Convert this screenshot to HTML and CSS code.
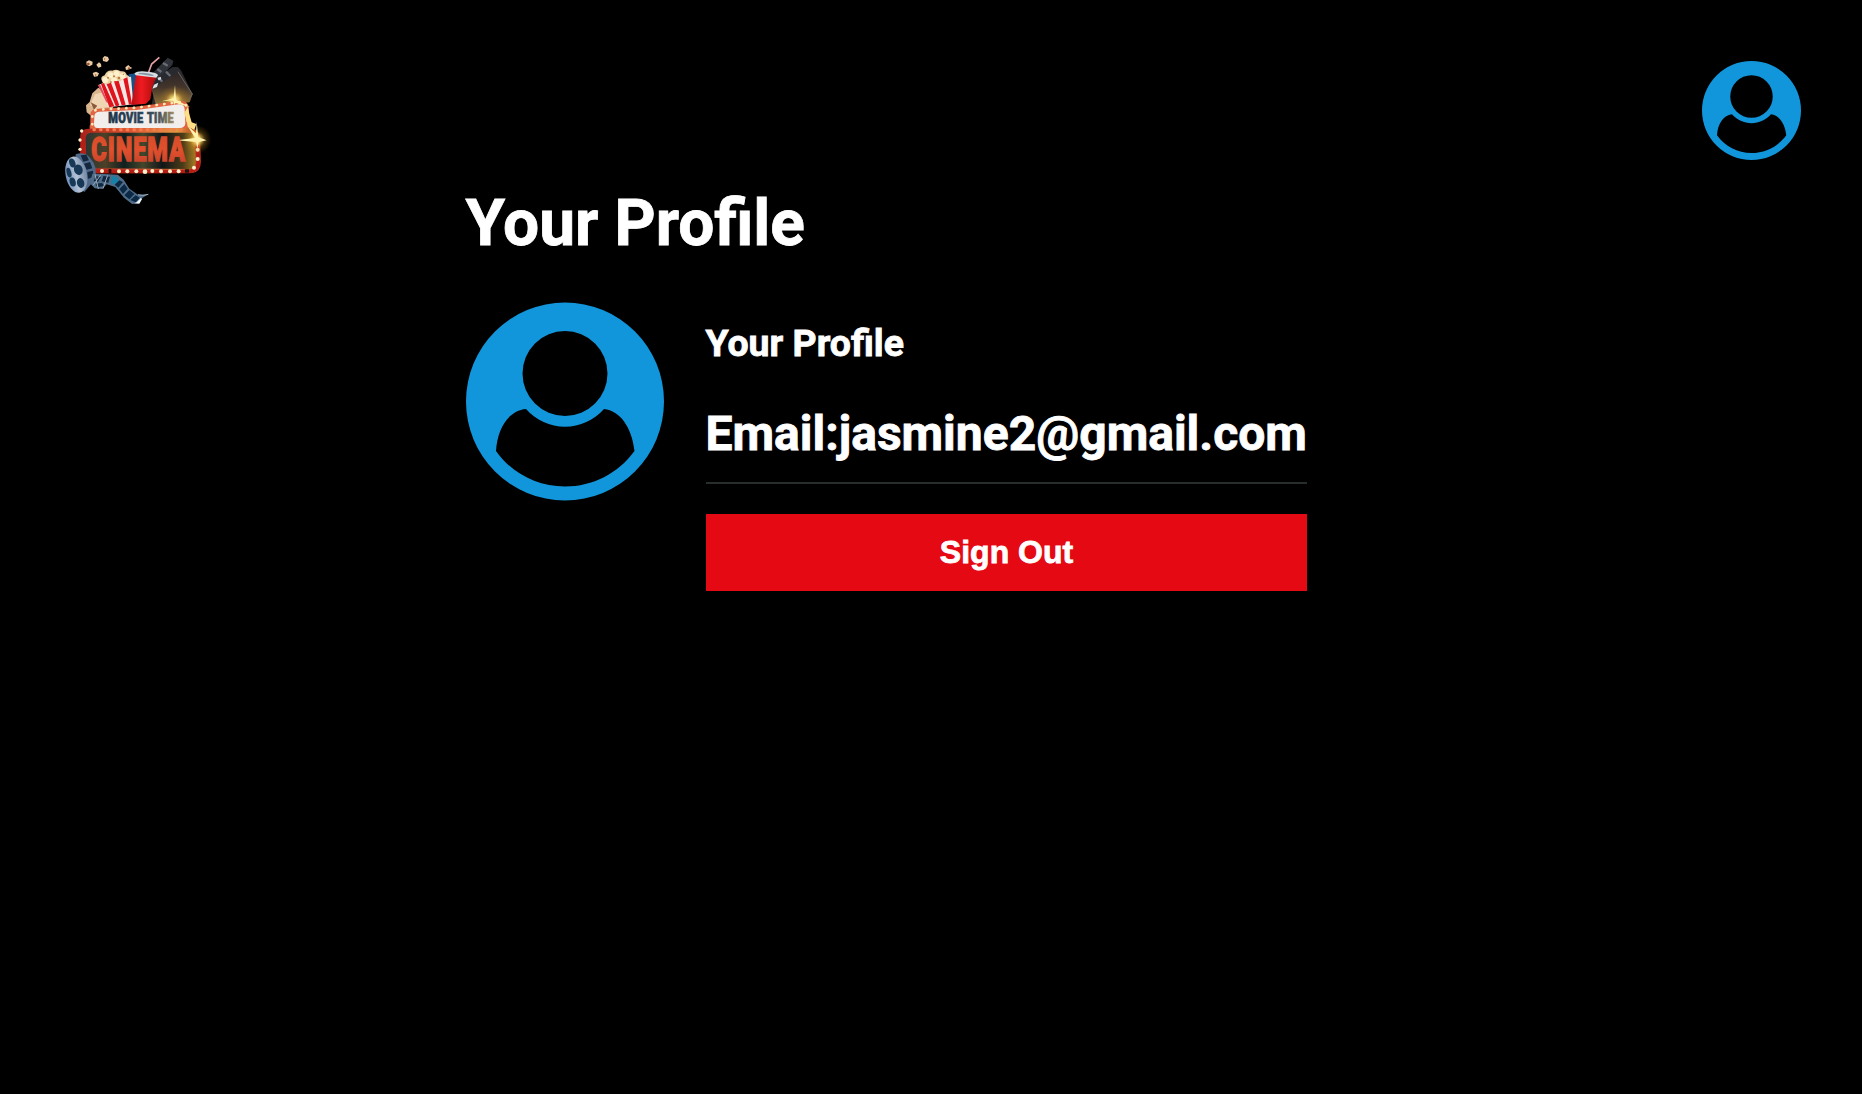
FILE: index.html
```html
<!DOCTYPE html>
<html lang="en">
<head>
<meta charset="utf-8">
<title>Your Profile</title>
<link rel="stylesheet" href="styles.css">
</head>
<body>
<svg class="defs" width="0" height="0" aria-hidden="true">
  <symbol id="avatar" viewBox="0 0 198 198">
    <path fill="#1296db" fill-rule="evenodd" d="M99 0a99 99 0 1 1 0 198a99 99 0 1 1 0-198zM99 28.500a42.500 42.500 0 1 0 0 85a42.500 42.500 0 1 0 0-85zM60 106.500C43 108 31.500 125 30 148.500C46 171 71 184 99 184S152 171 168.500 148.500C166 125 154 108 138 106.500C128 117.500 114 124.300 99 124.300S70 117.500 60 106.500z"/>
  </symbol>
</svg>
<header class="nav">
  <svg class="logo" viewBox="0 0 480 495" role="img" aria-label="Movie Time Cinema">
    <defs>
      <linearGradient id="cup" x1="0" x2="1"><stop offset="0" stop-color="#b50d12"/><stop offset=".4" stop-color="#ef1b20"/><stop offset="1" stop-color="#a90b0d"/></linearGradient>
      <linearGradient id="slate" x1="0" x2="0" y1="0" y2="1"><stop offset="0" stop-color="#2b2526"/><stop offset=".5" stop-color="#43352b"/><stop offset="1" stop-color="#8f7038"/></linearGradient>
      <linearGradient id="frame" x1="0" x2="1"><stop offset="0" stop-color="#a81f18"/><stop offset=".45" stop-color="#e25a34"/><stop offset=".8" stop-color="#e09a40"/><stop offset="1" stop-color="#b32c1b"/></linearGradient>
      <linearGradient id="board" x1="0" x2="1"><stop offset="0" stop-color="#2b3632"/><stop offset=".18" stop-color="#4d4026"/><stop offset=".35" stop-color="#10201f"/><stop offset=".52" stop-color="#45462b"/><stop offset=".7" stop-color="#101619"/><stop offset=".88" stop-color="#4a3a18"/><stop offset="1" stop-color="#a37b22"/></linearGradient>
      <linearGradient id="letters" x1="0" x2="0" y1="0" y2="1"><stop offset="0" stop-color="#d04a28"/><stop offset=".5" stop-color="#e2502d"/><stop offset="1" stop-color="#bd3f2a"/></linearGradient>
      <linearGradient id="title" gradientUnits="userSpaceOnUse" x1="159" x2="356" y1="0" y2="0"><stop offset="0" stop-color="#1d3448"/><stop offset=".6" stop-color="#33475a"/><stop offset=".8" stop-color="#51585b"/><stop offset="1" stop-color="#a08d5f"/></linearGradient>
      <linearGradient id="reel" x1="0" x2="1"><stop offset="0" stop-color="#6f8fb8"/><stop offset=".5" stop-color="#b4c2d6"/><stop offset="1" stop-color="#7187a3"/></linearGradient>
      <radialGradient id="glow"><stop offset="0" stop-color="#fffbd0"/><stop offset=".25" stop-color="#ffdf72" stop-opacity=".8"/><stop offset=".55" stop-color="#d69b2a" stop-opacity=".3"/><stop offset="1" stop-color="#a87010" stop-opacity="0"/></radialGradient>
    </defs>

    <!-- ticket and backdrop -->
    <path fill="#d9b68d" d="M130 128L112 145L104 171L93 181L95 202L110 214L175 188L158 145z"/>
    <path fill="#f0d5b3" d="M120 148L145 142L168 184L125 193L105 180z"/>
    <path fill="#8a5a3c" d="M107 172l20 10-10 12z"/>
    <path fill="#155187" d="M221 88L246 84L258 176L222 180z"/>

    <!-- clapperboard -->
    <path fill="#29292e" d="M272 126L352 67Q372 61 381 82L413 148L403 172L290 178L298 137z"/>
    <path fill="url(#slate)" d="M289 131L367 77L413 147L404 172L302 178z"/>
    <path fill="none" stroke="#6a635f" stroke-width="3" d="M368 79L412 147L404 160"/>
    <path fill="#30323a" d="M276 102L338 38L355 47L352 60L293 119z"/>
    <path fill="#292a30" d="M270 122L350 68L370 66L368 82L292 132z"/>
    <path stroke="#696b72" stroke-width="7" d="M307 72l12 9M324 54l14 8M308 97l14 13M333 80l13 13"/>
    <path fill="#dce4e9" d="M281 105l14-3 2 9-13 5zM297 119l13-6-4 13-14 5zM309 99l8-4 2 8-9 3z"/>

    <!-- popcorn box -->
    <path fill="#ead1a1" d="M143 112Q132 96 149 91Q155 75 172 77Q185 70 197 79Q211 77 215 89Q230 95 222 110L190 122L145 122z"/>
    <g fill="#fff0cc"><circle cx="151" cy="105" r="9"/><circle cx="166" cy="91" r="9"/><circle cx="185" cy="86" r="9"/><circle cx="202" cy="94" r="9"/><circle cx="177" cy="106" r="9"/><circle cx="210" cy="103" r="7"/></g>
    <g fill="#b97b3c"><circle cx="159" cy="98" r="3"/><circle cx="177" cy="94" r="3"/><circle cx="192" cy="99" r="4"/><circle cx="168" cy="112" r="3"/><circle cx="205" cy="88" r="2"/></g>
    <path fill="#f3e8e4" d="M130 120L145 114L158 119L178 108L195 109L209 99L228 95L235 178L161 187z"/>
    <path fill="#df141d" d="M138 117L147 114L178 184L163 187zM155 118L168 113L193 181L183 185zM177 109L191 108L212 179L200 181zM205 102L217 97L231 177L222 179z"/>
    <path fill="#e44b5c" d="M129 121L136 119L160 174L154 172z"/>

    <!-- soda cup -->
    <path fill="none" stroke="#e3a1a2" stroke-width="5" d="M280 84L290 57L313 37"/>
    <path fill="url(#cup)" d="M243 88L305 93L292 126L286 163L273 176L229 180z"/>
    <path fill="#d8dfe5" d="M238 86Q247 76 277 80Q307 82 309 91L304 98L243 91z"/>
    <path fill="#8999a5" d="M251 84Q276 80 298 91L291 93L250 87z"/>

    <!-- loose popcorn -->
    <g fill="#e8cba4"><path d="M94 50l8-4 11 4-1 9-9 5-8-4z"/><path d="M143 39l6-6 10 3 3 8-6 7-12-3z"/><path d="M124 59l8-7 6 5 1 8-9 3z"/><path d="M113 84l10-4 9 5-4 9-11 1z"/><path d="M211 67l9-7 6 6 6 3-9 4-10 2z"/></g>
    <g fill="#a64f2c"><circle cx="100" cy="57" r="4"/><circle cx="149" cy="42" r="2"/><circle cx="122" cy="90" r="2"/><circle cx="222" cy="70" r="3"/></g>

    <ellipse cx="358" cy="165" rx="48" ry="45" fill="url(#glow)"/>

    <!-- title sign -->
    <path fill="#e26442" d="M106 211Q106 191 127 191L240 185L374 167Q398 166 401 187L405 236Q404 258 388 260L108 263Q101 250 106 235z"/>
    <path fill="#f1eeeb" d="M118 215Q118 201 132 200L245 195L371 178Q388 177 389 193L391 235Q390 248 377 249L127 249Q117 249 117 238z"/>
    <path fill="none" stroke="#ffe8b8" stroke-width="8" stroke-linecap="round" stroke-dasharray="1 22" d="M112 238V210Q112 195 130 194L245 188L374 171Q394 171 395 189L399 237"/>
    <text class="logo-title" x="160" y="235" textLength="197" lengthAdjust="spacingAndGlyphs" fill="url(#title)" stroke="url(#title)">MOVIE TIME</text>

    <!-- main sign -->
    <path fill="url(#frame)" d="M76 270Q77 252 100 251L405 249Q433 253 435 277L438 350Q437 381 411 384L112 385Q76 379 75 350z"/>
    <path fill="url(#board)" d="M92 280Q93 264 108 263L399 263Q417 264 418 281L422 351Q421 370 402 372L110 370Q94 369 94 350z"/>
    <path fill="none" stroke="#f47c51" stroke-width="10" stroke-linecap="round" stroke-dasharray="1 19" d="M117 254H390"/>
    <path fill="none" stroke="#b51d15" stroke-width="11" d="M83 275V350Q87 379 116 379H405Q431 376 430 349L428 285"/>
    <g fill="#fff1cb"><circle cx="80" cy="258" r="5"/><circle cx="75" cy="285" r="5"/><circle cx="75" cy="313" r="5"/><circle cx="141" cy="378" r="6"/><circle cx="192" cy="379" r="6"/><circle cx="217" cy="379" r="6"/><circle cx="244" cy="379" r="6"/><circle cx="270" cy="380" r="7"/><circle cx="292" cy="378" r="6"/><circle cx="318" cy="379" r="6"/><circle cx="345" cy="379" r="6"/><circle cx="371" cy="379" r="6"/><circle cx="417" cy="368" r="6"/><circle cx="428" cy="342" r="6"/><circle cx="428" cy="314" r="6"/></g>
    <path fill="#201411" d="M161 372h8v12h-8zM390 373h12v10h-12z"/>
    <ellipse cx="427" cy="284" rx="42" ry="44" fill="url(#glow)"/>
    <path fill="#fff2ad" d="M360 120L363 164L406 187L362 174L357 181L355 166L320 169L356 160zM425 230L430 277L455 286L431 291L427 311L423 291L365 286L420 279L396 240L423 265z"/>
    <path fill="#ffdf83" d="M388 203l11-18 4 23 7 24 14 5-6 17-19-8z"/>
    <text class="logo-name" x="109" y="349" textLength="284" lengthAdjust="spacingAndGlyphs" fill="url(#letters)" stroke="url(#letters)">CINEMA</text>

    <!-- film reel -->
    <path fill="#50698a" d="M62 328Q92 317 108 343Q130 366 119 405L88 441L61 420z"/>
    <path fill="#14283d" d="M77 331L94 329L102 346L85 350zM87 356L105 351L112 370L95 374zM97 381L114 377L115 396L98 402z"/>
    <ellipse cx="64" cy="389" rx="32" ry="55" transform="rotate(-12 64 389)" fill="url(#reel)"/>
    <g fill="#173957"><ellipse cx="52" cy="354" rx="9" ry="14" transform="rotate(-20 52 354)"/><ellipse cx="70" cy="374" rx="13" ry="16" transform="rotate(-20 70 374)"/><ellipse cx="42" cy="383" rx="7" ry="15" transform="rotate(-15 42 383)"/><ellipse cx="77" cy="414" rx="11" ry="15" transform="rotate(-15 77 414)"/><ellipse cx="53" cy="411" rx="9" ry="14" transform="rotate(-15 53 411)"/></g>

    <!-- film strip -->
    <path fill="#4f6c88" d="M112 386L146 387L188 389L206 404L223 431L249 449L280 448L263 458L250 475L231 477L207 458L181 426L155 418L142 432L119 430L105 415z"/>
    <path fill="#102840" d="M122 394l16 2-10 16-12-4zM145 393l20 2-5 18-20-4zM121 416l20-2 8 9-22 4z"/>
    <path fill="#1680a6" d="M171 394l15 2 5 14-16 8-7-5z"/>
    <path fill="#0b2845" d="M193 406l11 5-14 17-11-9zM208 417l10 14-14 16-11-15zM223 435l15 12-15 16-15-12zM242 451l12 7-12 14-16-7z"/>
    <path fill="#eef8fb" d="M258 458l-13 14-8 3 16 1 8-13z"/>
    <path fill="none" stroke="#9caab5" stroke-width="3" d="M249 449Q263 454 280 448M120 388l10 44M137 390l-23 31M158 391l-14 40"/>
  </svg>
  <svg class="nav-avatar" role="img" aria-label="Account"><use href="#avatar"/></svg>
</header>
<main class="profile">
  <h1 class="profile-heading">Your Profile</h1>
  <div class="profile-info">
    <svg class="profile-avatar" role="img" aria-label="Avatar"><use href="#avatar"/></svg>
    <div class="profile-details">
      <h3 class="profile-subtitle">Your Profile</h3>
      <h2 class="profile-email">Email:jasmine2@gmail.com</h2>
      <button class="sign-out" type="button">Sign Out</button>
    </div>
  </div>
</main>
</body>
</html>
```
FILE: styles.css
```css
* {
  box-sizing: border-box;
}

body {
  margin: 0;
  min-height: 100vh;
  background: #000;
  color: #fff;
  font-family: Roboto, "Liberation Sans", sans-serif;
}

.defs {
  display: block;
}

.nav {
  display: flex;
  justify-content: space-between;
  align-items: flex-start;
  height: 186px;
  padding: 45px 61px 0 55px;
}

.logo {
  width: 160px;
  height: 165px;
  overflow: visible;
}

.logo-title,
.logo-name {
  font-family: Roboto, sans-serif;
  font-weight: 900;
}

.logo-title {
  font-size: 43px;
  letter-spacing: 1px;
  word-spacing: 3px;
  stroke-width: 2px;
}

.logo-name {
  font-size: 102px;
  letter-spacing: 4px;
  stroke-width: 4px;
}

.nav-avatar {
  width: 99px;
  height: 99px;
  margin-top: 16px;
}

.profile {
  width: 50%;
  margin: 0 auto;
}

.profile-heading,
.profile-subtitle,
.profile-email {
  -webkit-text-stroke: 0.8px #fff;
}

.profile-heading {
  margin: 0;
  font-size: 64px;
  line-height: 75px;
  font-weight: 700;
}

.profile-info {
  display: flex;
  align-items: flex-start;
  gap: 42px;
  margin-top: 41px;
}

.profile-avatar {
  flex: none;
  width: 198px;
  height: 199px;
}

.profile-details {
  display: flex;
  flex-direction: column;
  width: 601px;
}

.profile-subtitle {
  margin: 19px 0 0;
  font-size: 37.44px;
  line-height: 45px;
}

.profile-email {
  margin: 38px 0 30px;
  padding-bottom: 18px;
  border-bottom: 2px solid #282d2d;
  font-size: 48px;
  line-height: 60px;
  white-space: nowrap;
}

.sign-out {
  height: 77px;
  padding: 0 0 1px 1px;
  border: 0;
  background: #e50914;
  color: #fff;
  font: bold 32px "Liberation Sans", Arial, sans-serif;
  -webkit-text-stroke: 0.8px #fff;
}
```
